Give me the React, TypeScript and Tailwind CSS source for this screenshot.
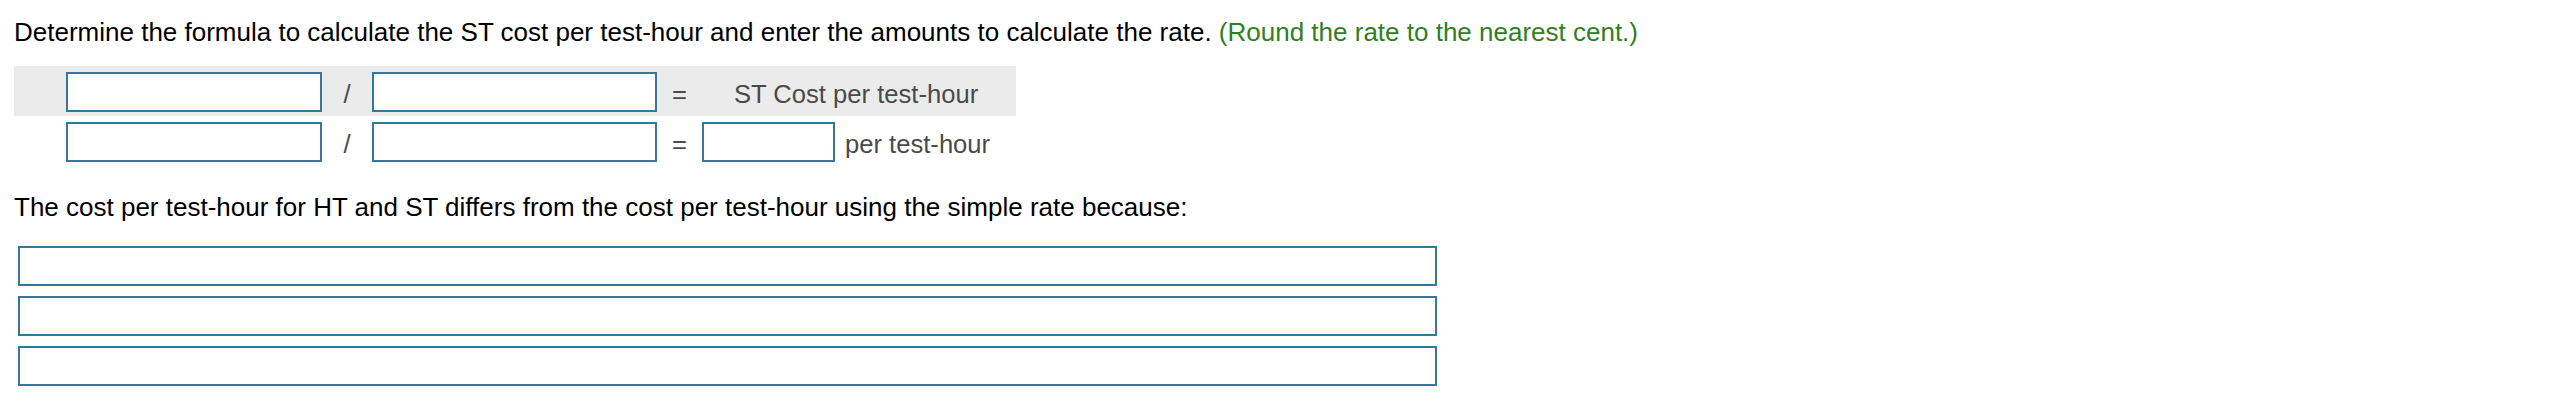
import React from "react";

const Box = ({ w }: { w: string }) => (
  <div className={`${w} h-[40px] border-2 border-[#35799a] bg-white`} />
);

export default function App() {
  return (
    <div className="w-[2570px] h-[402px] bg-white font-['Liberation_Sans',Arial,sans-serif] overflow-hidden">
      <p className="pl-[14px] pt-[18px] text-[26px] leading-[1.15] text-black whitespace-nowrap">
        Determine the formula to calculate the ST cost per test-hour and enter the amounts to calculate the rate.{" "}
        <span className="text-[#2f801f]">(Round the rate to the nearest cent.)</span>
      </p>

      <div className="ml-[14px] mt-[18px] w-[1002px] text-[25.6px] text-[#4a4a4a] leading-[1.15]">
        <div className="flex items-center h-[50px] bg-[#ebebeb] pl-[52px] pt-[2px]">
          <div className="w-[256px] h-[40px] border-2 border-[#35799a] bg-white" />
          <div className="w-[50px] text-center mt-[6px]">/</div>
          <div className="w-[285px] h-[40px] border-2 border-[#35799a] bg-white" />
          <div className="w-[45px] text-center mt-[6px]">=</div>
          <div className="pl-[32px] whitespace-nowrap mt-[6px]">ST Cost per test-hour</div>
        </div>
        <div className="flex items-center h-[50px] pl-[52px] pt-[2px]">
          <div className="w-[256px] h-[40px] border-2 border-[#35799a] bg-white" />
          <div className="w-[50px] text-center mt-[6px]">/</div>
          <div className="w-[285px] h-[40px] border-2 border-[#35799a] bg-white" />
          <div className="w-[45px] text-center mt-[6px]">=</div>
          <div className="w-[133px] h-[40px] border-2 border-[#35799a] bg-white" />
          <div className="pl-[10px] whitespace-nowrap mt-[6px]">per test-hour</div>
        </div>
      </div>

      <p className="pl-[14px] mt-[27px] text-[26px] leading-[1.15] text-black whitespace-nowrap">
        The cost per test-hour for HT and ST differs from the cost per test-hour using the simple rate because:
      </p>

      <div className="ml-[18px] mt-[23px] w-[1419px] flex flex-col gap-[10px]">
        <Box w="w-full" />
        <Box w="w-full" />
        <Box w="w-full" />
      </div>
    </div>
  );
}
